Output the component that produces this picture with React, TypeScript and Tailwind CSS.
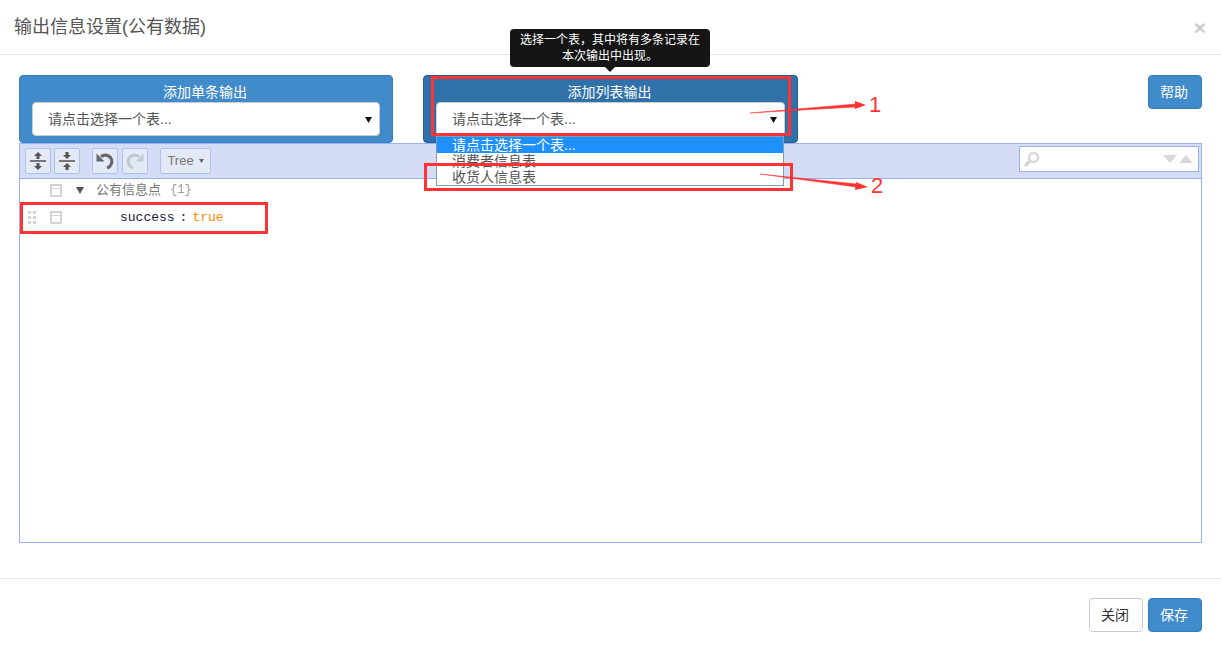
import React from "react";

const CJK = { fontFamily: '"Liberation Sans","Noto Sans CJK SC",sans-serif' };

function Caret() {
  return (
    <svg width="7" height="7" viewBox="0 0 7 7" className="shrink-0">
      <path d="M0 1h7L3.5 7z" fill="#111" />
    </svg>
  );
}

function Select() {
  return (
    <div className="flex h-[34px] items-center justify-between rounded-[4px] border border-[#ccc] bg-white pl-[15px] pr-[7px] text-[14px] text-[#555]">
      <span>请点击选择一个表...</span>
      <Caret />
    </div>
  );
}

function ToolButton({ children }: { children: React.ReactNode }) {
  return (
    <div className="flex h-[26px] w-[26px] items-center justify-center rounded-[2px] border border-[#aec0f8] bg-[#e3eaf6]">
      {children}
    </div>
  );
}

function RowBox() {
  return (
    <div className="h-[13px] w-[12px] border-2 border-[#d3d3d3]">
      <div className="mt-[2px] h-[1px] bg-[#d3d3d3]" />
    </div>
  );
}

function Expand() {
  return (
    <svg width="16" height="20" viewBox="0 0 16 20">
      <path d="M8 1l4 4H9.500V8H6.500V5H4z" fill="#555" />
      <path d="M8 19l4-4H9.500V12H6.500V15H4z" fill="#555" />
      <rect y="9" width="16" height="2" fill="#777" />
    </svg>
  );
}

function Collapse() {
  return (
    <svg width="16" height="20" viewBox="0 0 16 20">
      <path d="M8 8l4-4H9.500V1H6.500V4H4z" fill="#555" />
      <path d="M8 12l4 4H9.500V19H6.500V16H4z" fill="#555" />
      <rect y="9" width="16" height="2" fill="#777" />
    </svg>
  );
}

function Undo({ color, flip }: { color: string; flip?: boolean }) {
  return (
    <svg width="20" height="18" viewBox="0 0 20 18" style={flip ? { transform: "scaleX(-1)" } : undefined}>
      <path d="M6 4.800C8 3.200 11 2.700 13.500 4C16.500 5.600 17.500 9 16.300 12C15.600 13.800 14 15.300 12 16" fill="none" stroke={color} strokeWidth="3.200" />
      <path d="M1.500 1.500L9.500 9.500H1.500z" fill={color} />
    </svg>
  );
}

export default function App() {
  return (
    <div className="relative h-[652px] w-[1221px] overflow-hidden bg-white text-[#333]" style={CJK}>
      <header className="flex h-[55px] items-center justify-between border-b border-[#e5e5e5] pl-[14px] pr-[15px]">
        <h1 className="text-[18px] font-normal text-[#555]">输出信息设置(公有数据)</h1>
        <span className="text-[21px] leading-none font-bold text-[#ccc]">×</span>
      </header>

      <main className="px-[19px] pt-[20px]">
        <div className="flex items-start">
          <section className="h-[68px] w-[374px] rounded-[4px] border border-[#357ebd] bg-[#428bca] px-[12px] pt-[7px] text-center">
            <div className="mb-[1px] h-[18px] pr-[2px] text-[14px] leading-[18px] text-white">添加单条输出</div>
            <div className="text-left"><Select /></div>
          </section>
          <section className="ml-[30px] h-[68px] w-[375px] rounded-[4px] border border-[#285e8e] bg-[#3071a9] px-[12px] pt-[7px] text-center">
            <div className="mb-[1px] h-[18px] pr-[2px] text-[14px] leading-[18px] text-white">添加列表输出</div>
            <div className="text-left"><Select /></div>
          </section>
          <button className="ml-auto h-[34px] w-[54px] rounded-[4px] border border-[#357ebd] bg-[#428bca] pr-[2px] text-[14px] text-white">帮助</button>
        </div>

        <div className="h-[400px] border border-[#97b0f8]">
          <div className="flex h-[35px] items-center border-b border-[#97b0f8] bg-[#d5ddf6] pl-[5px] pr-[2px]">
            <ToolButton><Expand /></ToolButton>
            <div className="ml-[3px]"><ToolButton><Collapse /></ToolButton></div>
            <div className="ml-[12px]"><ToolButton><Undo color="#666" /></ToolButton></div>
            <div className="ml-[4px]"><ToolButton><Undo color="#c4c9cf" flip /></ToolButton></div>
            <div className="ml-[12px] flex h-[26px] w-[51px] items-center justify-center gap-[5px] rounded-[2px] border border-[#aec0f8] bg-[#e3eaf6] pb-[1px] text-[13px] text-[#777]">
              Tree
              <svg width="5" height="4" viewBox="0 0 5 4"><path d="M0 0h5L2.500 4z" fill="#666" /></svg>
            </div>
            <div className="mb-[4px] ml-auto flex h-[26px] w-[180px] items-center justify-between border border-[#97b0f8] bg-white pl-[3px] pr-[5px]">
              <svg width="17" height="17" viewBox="0 0 17 17">
                <circle cx="10.500" cy="6.500" r="4.500" fill="none" stroke="#d9d9d9" strokeWidth="2.500" />
                <path d="M7 10L2 15" stroke="#d9d9d9" strokeWidth="3.500" />
              </svg>
              <svg width="30" height="8" viewBox="0 0 30 8">
                <path d="M0 0h14L7 8z" fill="#d9d9d9" />
                <path d="M16 8h14L23 0z" fill="#d9d9d9" />
              </svg>
            </div>
          </div>

          <div className="flex h-[22px] items-center pl-[30px] text-[13px] text-[#777]">
            <RowBox />
            <svg width="8" height="7" viewBox="0 0 8 7" className="ml-[14px]"><path d="M0 0h8L4 7z" fill="#555" /></svg>
            <span className="ml-[12px]">公有信息点</span>
            <span className="ml-[9px] text-[12px] text-[#999]" style={{ fontFamily: '"Liberation Mono",monospace' }}>{"{1}"}</span>
          </div>
          <div className="flex h-[32px] items-center pl-[8px]">
            <div className="grid w-[8px] grid-cols-2 gap-[2px]">
              {[0, 1, 2, 3, 4, 5].map((i) => (
                <div key={i} className="h-[3px] w-[3px] bg-[#d3d3d3]" />
              ))}
            </div>
            <div className="ml-[14px]"><RowBox /></div>
            <div className="ml-[58px] flex items-center pt-[1px] text-[13px]" style={{ fontFamily: '"Liberation Mono",monospace' }}>
              <span className="text-[#1a1a3a]">success</span>
              <span className="ml-[5px] text-[#333]">:</span>
              <span className="ml-[5px] text-[#ff8c00]">true</span>
            </div>
          </div>
        </div>
      </main>

      <footer className="mt-[35px] flex h-[74px] items-start justify-end gap-[5px] border-t border-[#e5e5e5] pr-[19px] pt-[19px]">
        <button className="h-[34px] w-[54px] rounded-[4px] border border-[#ccc] bg-white pr-[2px] text-[14px] text-[#333]">关闭</button>
        <button className="h-[34px] w-[54px] rounded-[4px] border border-[#357ebd] bg-[#428bca] pr-[2px] text-[14px] text-white">保存</button>
      </footer>

      {/* open dropdown */}
      <div className="absolute left-[436px] top-[136px] h-[50px] w-[348px] border border-[#7f9db9] bg-white text-[14px] leading-[16px] text-[#555]">
        <div className="h-[16px] bg-[#1e90ff] pl-[15px] text-white">请点击选择一个表...</div>
        <div className="h-[16px] pl-[15px]">消费者信息表</div>
        <div className="h-[16px] pl-[15px]">收货人信息表</div>
      </div>

      {/* tooltip */}
      <div className="absolute left-[510px] top-[29px] h-[38px] w-[200px] rounded-[4px] bg-[#151515] px-[9px] pt-[3px] text-center text-[12px] leading-[16px] text-white">
        选择一个表，其中将有多条记录在本次输出中出现。
        <div className="absolute left-[95px] top-[38px] h-0 w-0 border-x-[5px] border-t-[5px] border-x-transparent border-t-[#151515]" />
      </div>

      {/* red annotations */}
      <div className="absolute left-[431px] top-[76px] h-[60px] w-[360px] border-[3px] border-[#ff3333]" />
      <div className="absolute left-[424px] top-[163px] h-[28px] w-[369px] border-[3px] border-[#ff3333]" />
      <div className="absolute left-[20px] top-[202px] h-[32px] w-[248px] border-[3px] border-[#ff3333]" />
      <svg className="absolute left-[740px] top-[95px]" width="130" height="100" viewBox="0 0 130 100">
        <path d="M10 18L116 9L116 12z" fill="#ff3333" stroke="#ff3333" strokeWidth="0.500" />
        <path d="M115 6L126 10L115 14z" fill="#ff3333" />
        <path d="M20 79L117 89L116 92z" fill="#ff3333" stroke="#ff3333" strokeWidth="0.500" />
        <path d="M116 87L128 92L115 95z" fill="#ff3333" />
      </svg>
      <span className="absolute left-[869px] top-[92px] text-[22px] leading-[26px] text-[#ff3333]">1</span>
      <span className="absolute left-[871px] top-[173px] text-[22px] leading-[26px] text-[#ff3333]">2</span>
    </div>
  );
}
